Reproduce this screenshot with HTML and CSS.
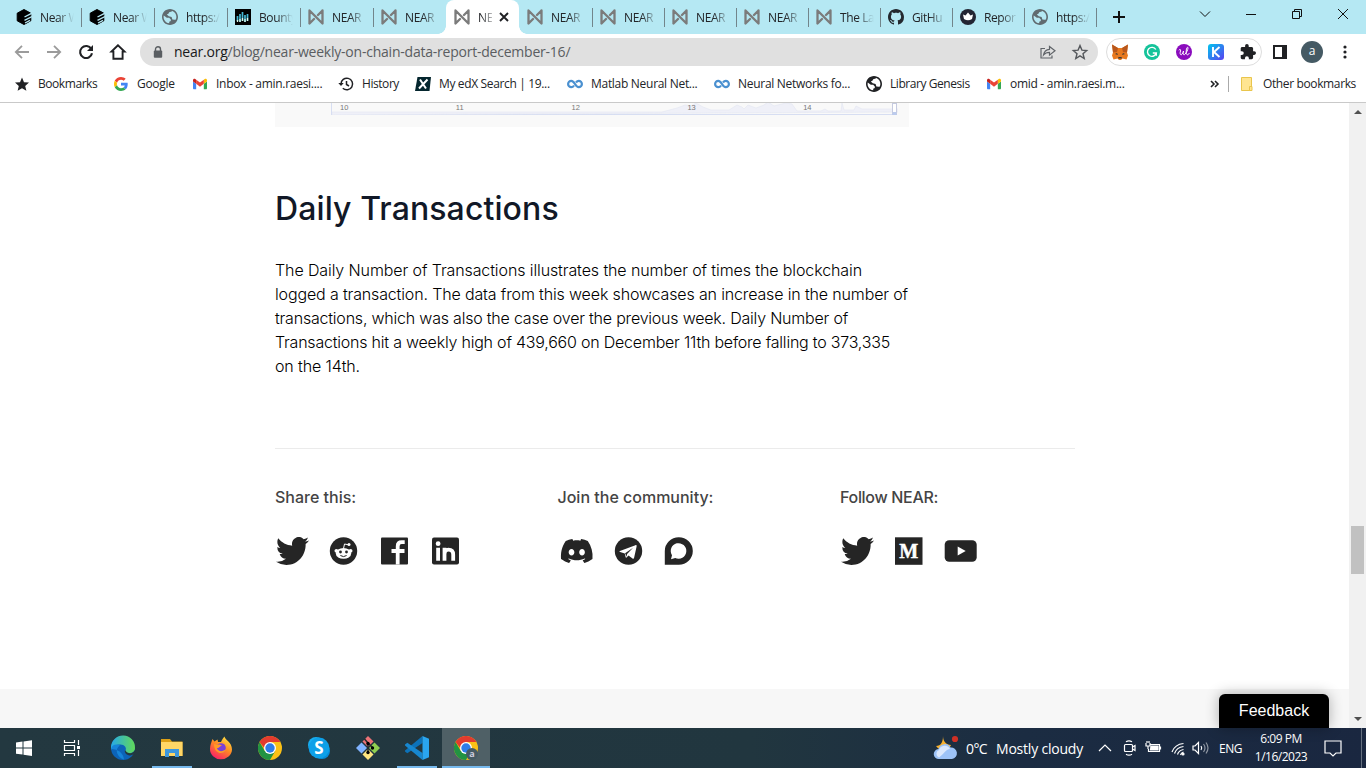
FILE: index.html
```html
<!DOCTYPE html>
<html lang="en">
<head>
<meta charset="utf-8">
<title>NEAR | Weekly On-Chain Data Report</title>
<link rel="stylesheet" href="styles.css">
</head>
<body>
<svg class="defs" aria-hidden="true">
  <symbol id="near" viewBox="0 0 16 16"><path d="M1.500 14.500V1.500L14.500 14.500V1.500M1.500 14.500L6 10M14.500 1.500L10 6" fill="none" stroke="#7b7b7b" stroke-width="2.300" stroke-linecap="round" stroke-linejoin="round"/></symbol>
  <symbol id="cube" viewBox="0 0 16 16"><path d="M8 .5l6.800 3.700v7.600L8 15.500l-6.800-3.700V4.200z" stroke="#000" stroke-linejoin="round"/><path d="M8.500 8L16 4.200M8.500 11.300L16 7.500M9 14l5-2.700" stroke="#b5e8f3" stroke-width="1.400"/></symbol>
  <symbol id="globe" viewBox="2 2 20 20"><path d="M12 2C6.480 2 2 6.480 2 12s4.480 10 10 10 10-4.480 10-10S17.520 2 12 2zm-1 17.930c-3.950-.49-7-3.850-7-7.930 0-.62.08-1.210.21-1.790L8 13h3l2 2v2l-2 1v1.930zM18 15.500l-3-.5-1-3-3.500-1-2.500-2 2-1 1-2 3-1 1-.41c2.930 1.190 5 4.060 5 7.410 0 1.500-.4 2.500-1 3.500z" fill="currentColor"/></symbol>
  <symbol id="gmail" viewBox="0 0 88 66"><path fill="#4285f4" d="M6 66h14V32L0 17v43c0 3.320 2.690 6 6 6"/><path fill="#34a853" d="M68 66h14c3.320 0 6-2.690 6-6V17L68 32"/><path fill="#fbbc04" d="M68 6v26l20-15V9c0-7.420-8.470-11.650-14.400-7.200"/><path fill="#ea4335" d="M20 32V6l24 18L68 6v26L44 50"/><path fill="#c5221f" d="M0 9v8l20 15V6l-5.600-4.200C8.470-2.650 0 1.580 0 9"/></symbol>
  <symbol id="loop" viewBox="0 0 16 10"><path d="M7 6.500C6 8 5.200 8.200 4.300 8.200a3.200 3.200 0 010-6.400c3.600 0 3.800 6.400 7.400 6.400a3.200 3.200 0 000-6.400C10.800 1.800 10 2.200 9 3.500" fill="none" stroke="#4a90d0" stroke-width="2.200"/></symbol>
  <symbol id="twitter" viewBox="0 2.200 24 19.600" preserveAspectRatio="none"><path d="M23.953 4.570a10 10 0 01-2.825.775 4.958 4.958 0 002.163-2.723c-.951.555-2.005.959-3.127 1.184a4.920 4.920 0 00-8.384 4.482C7.690 8.095 4.067 6.130 1.640 3.162a4.822 4.822 0 00-.666 2.475c0 1.710.87 3.213 2.188 4.096a4.904 4.904 0 01-2.228-.616v.06a4.923 4.923 0 003.946 4.827 4.996 4.996 0 01-2.212.085 4.936 4.936 0 004.604 3.417 9.867 9.867 0 01-6.102 2.105c-.39 0-.779-.023-1.170-.067a13.995 13.995 0 007.557 2.209c9.053 0 13.998-7.496 13.998-13.985 0-.21 0-.42-.015-.63A9.935 9.935 0 0024 4.590z" fill="#252525"/></symbol>
  <symbol id="chrome" viewBox="0 0 24 24"><circle cx="12" cy="12" r="12" fill="#fbc116"/><path d="M1.600 6A12 12 0 0012 24l5.200-9L12 12 6.800 15z" fill="#229342"/><path d="M1.600 6A12 12 0 0122.400 6H12l-5 7z" fill="#e33b2e"/><circle cx="12" cy="12" r="6" fill="#fff"/><circle cx="12" cy="12" r="4.700" fill="#2f7de9"/></symbol>
</svg>

<header class="browser">
  <div class="tabstrip">
    <div class="tab"><svg class="fav"><use href="#cube"/></svg><span>Near W</span></div>
    <div class="tab"><svg class="fav"><use href="#cube"/></svg><span>Near W</span></div>
    <div class="tab"><svg class="fav globe"><use href="#globe"/></svg><span>https:/</span></div>
    <div class="tab"><svg class="fav" viewBox="0 0 16 16"><rect width="16" height="16"/><path d="M2.500 7v5M5 5v8M7.500 3v9M10 6v7M12.500 5v7" stroke="#47b9d4" stroke-width="1.700"/><path d="M2.500 11v2M5 10v3M7.500 9v3M10 10v3M12.500 9v3" stroke="#dff7e8" stroke-width="1.300"/></svg><span>Bounty</span></div>
    <div class="tab"><svg class="fav"><use href="#near"/></svg><span>NEAR</span></div>
    <div class="tab before-active"><svg class="fav"><use href="#near"/></svg><span>NEAR</span></div>
    <div class="tab active"><svg class="fav"><use href="#near"/></svg><span>NE</span><svg class="close" viewBox="0 0 10 10"><path d="M1 1l8 8M9 1L1 9" stroke="#202124" stroke-width="1.900"/></svg></div>
    <div class="tab"><svg class="fav"><use href="#near"/></svg><span>NEAR</span></div>
    <div class="tab"><svg class="fav"><use href="#near"/></svg><span>NEAR</span></div>
    <div class="tab"><svg class="fav"><use href="#near"/></svg><span>NEAR</span></div>
    <div class="tab"><svg class="fav"><use href="#near"/></svg><span>NEAR</span></div>
    <div class="tab"><svg class="fav"><use href="#near"/></svg><span>The La</span></div>
    <div class="tab"><svg class="fav" viewBox="0 0 16 16"><path fill="#24292f" d="M8 0C3.580 0 0 3.580 0 8c0 3.540 2.290 6.530 5.470 7.590.4.07.55-.17.55-.38 0-.19-.01-.82-.01-1.490-2.010.37-2.530-.49-2.690-.94-.09-.23-.48-.94-.82-1.130-.28-.15-.68-.52-.01-.53.63-.01 1.080.58 1.230.82.72 1.210 1.870.87 2.330.66.07-.52.28-.87.51-1.070-1.780-.2-3.640-.89-3.640-3.950 0-.87.31-1.590.82-2.150-.08-.2-.36-1.020.08-2.120 0 0 .67-.21 2.200.82.64-.18 1.320-.27 2-.27s1.360.09 2 .27c1.530-1.040 2.200-.82 2.200-.82.44 1.100.16 1.920.08 2.120.51.56.82 1.270.82 2.150 0 3.070-1.870 3.750-3.650 3.950.29.25.54.73.54 1.480 0 1.070-.01 1.930-.01 2.200 0 .21.15.46.55.38A8.010 8.010 0 0016 8c0-4.420-3.580-8-8-8z"/></svg><span>GitHu</span></div>
    <div class="tab"><svg class="fav" viewBox="0 0 16 16"><circle cx="8" cy="8" r="8" fill="#222533"/><path d="M3 5.500l2.500 1L8 3.500l2.500 3 2.500-1-1 4.500q-4 2.500-8 0z" fill="#fff"/></svg><span>Repor</span></div>
    <div class="tab"><svg class="fav globe"><use href="#globe"/></svg><span>https:/</span></div>
    <svg class="newtab" viewBox="0 0 12 12"><path d="M6 0v12M0 6h12" stroke="#111" stroke-width="2"/></svg>
    <div class="winctl">
      <svg viewBox="0 0 12 12"><path d="M1 3.500l5 5 5-5" /></svg>
      <svg viewBox="0 0 12 12"><path d="M1 6.500h10"/></svg>
      <svg viewBox="0 0 12 12"><path d="M1.500 3.500h7v7h-7zM3.500 3.500v-2h7v7h-2"/></svg>
      <svg viewBox="0 0 12 12"><path d="M1 1l10 10M11 1L1 11"/></svg>
    </div>
  </div>

  <div class="toolbar">
    <div class="nav">
      <svg viewBox="0 0 16 16"><path d="M15 8H2M8 1.800L1.800 8 8 14.200" stroke="#9b9b9b" stroke-width="1.800" fill="none"/></svg>
      <svg viewBox="0 0 16 16"><path d="M1 8h13M8 1.800L14.200 8 8 14.200" stroke="#9b9b9b" stroke-width="1.800" fill="none"/></svg>
      <svg viewBox="0 0 16 16"><path d="M13.300 5A6 6 0 1014 9.200" stroke="#202124" stroke-width="2.100" fill="none"/><path d="M15 1v6H9z" fill="#202124"/></svg>
      <svg viewBox="0 0 16 16"><path d="M8 1.300L1.500 7.600H3.400V14.800h9.200V7.600h1.900z" stroke="#202124" stroke-width="1.900" fill="none"/></svg>
    </div>
    <div class="omnibox">
      <svg class="lock" viewBox="0 0 10 12"><path d="M2.500 5V3.200a2.500 2.500 0 015 0V5" stroke="#5a5e62" stroke-width="1.400" fill="none"/><rect x=".8" y="4.500" width="8.400" height="7.300" rx="1" fill="#5a5e62"/></svg>
      <span class="url"><b>near.org</b>/blog/near-weekly-on-chain-data-report-december-16/</span>
      <svg class="share" viewBox="0 0 16 14"><path d="M5 3.500H1v9.500h11V10.500M3.500 10c.6-3.700 3-5.500 6-5.700V1.500L15 5.800l-5.500 4.300V7.300c-2.700 0-4.500.8-6 2.700z" fill="none" stroke="#5f6368" stroke-width="1.200"/></svg>
      <svg class="star" viewBox="0 0 16 16"><path d="M8 1.500l1.900 4.600 4.800.4-3.700 3.200 1.200 4.800L8 11.900l-4.200 2.600L5 9.700 1.300 6.500l4.800-.4z" fill="none" stroke="#55585c" stroke-width="1.400"/></svg>
    </div>
    <div class="extensions">
      <svg viewBox="0 0 16 16"><path d="M0 .5l6 3.500h4l6-3.500-1 8 1 3-1.500 4-4-1-1.500 1.500h-2L5.500 14.500l-4 1L0 11.500l1-3z" fill="#e8791f"/><path d="M0 .5l6 3.500-1 4-4 .5zM16 .5L10 4l1 4 4 .5z" fill="#b8571c"/><path d="M5 9l1 2-3-1zM11 9l-1 2 3-1zM6.500 13h3l.5 1.500H6z" fill="#3b3b3b"/></svg>
      <svg viewBox="0 0 16 16"><circle cx="8" cy="8" r="8" fill="#15c39a"/><path d="M11.800 5.500A4.500 4.500 0 1012.300 9H8.800M12.300 8.500v3.300" stroke="#fff" stroke-width="1.400" fill="none"/></svg>
      <svg viewBox="0 0 16 16"><circle cx="8" cy="8" r="8" fill="#8a0cbd"/><path d="M2.800 6.300c1.200-1.500 2.200-.8 1.700.7-1 3 .2 4.800 1.500 3.200.8-1 1.200-2.200 1.500-3.200-.8 3.200.2 4.500 1.200 3.500C10.500 8.800 12 5.500 12 4c0-1.200-1.200-.8-1.500.8-.6 3-.3 6 .9 6 .8 0 1.500-.8 1.900-1.800" stroke="#fff" stroke-width="1" fill="none"/></svg>
      <svg viewBox="0 0 16 16"><defs><linearGradient id="kg" x2="1" y2="1"><stop stop-color="#00c6ee"/><stop offset="1" stop-color="#5b3ff0"/></linearGradient></defs><rect width="16" height="16" rx="3" fill="url(#kg)"/><path d="M5 3v10M11.500 3L6 8l5.500 5" stroke="#fff" stroke-width="1.900" fill="none"/></svg>
      <svg viewBox="1 1 22 22"><path d="M20.500 11H19V7c0-1.100-.9-2-2-2h-4V3.500a2.500 2.500 0 00-5 0V5H4c-1.100 0-2 .9-2 2v3.800h1.500a2.700 2.700 0 010 5.400H2V20c0 1.100.9 2 2 2h3.800v-1.500a2.700 2.700 0 015.400 0V22H17c1.100 0 2-.9 2-2v-4h1.500a2.500 2.500 0 000-5z" fill="#202124"/></svg>
    </div>
    <svg class="panel" viewBox="0 0 14 14"><path d="M1 1h12v12H1z" fill="#fff" stroke="#202124" stroke-width="2"/><path d="M9 1h4v12H9z" fill="#202124"/></svg>
    <span class="avatar">a</span>
    <svg class="kebab" viewBox="0 0 4 14"><circle cx="2" cy="2" r="1.600"/><circle cx="2" cy="7" r="1.600"/><circle cx="2" cy="12" r="1.600"/></svg>
  </div>

  <div class="bookmarks">
    <div class="bm tight"><svg viewBox="0 0 16 16"><path d="M8 1.500l2 4.700 5 .4-3.800 3.300 1.200 4.900L8 12.200l-4.400 2.600 1.200-4.900L1 6.600l5-.4z" fill="#202124"/></svg><span>Bookmarks</span></div>
    <div class="bm"><svg class="pad" viewBox="0 0 48 48"><path fill="#EA4335" d="M24 9.500c3.540 0 6.710 1.220 9.210 3.600l6.850-6.850C35.900 2.380 30.470 0 24 0 14.620 0 6.510 5.380 2.560 13.220l7.980 6.190C12.430 13.720 17.740 9.500 24 9.500z"/><path fill="#4285F4" d="M46.980 24.550c0-1.570-.15-3.090-.38-4.550H24v9.020h12.940c-.58 2.960-2.260 5.480-4.780 7.180l7.730 6c4.510-4.180 7.090-10.360 7.090-17.650z"/><path fill="#FBBC05" d="M10.530 28.590c-.48-1.450-.76-2.990-.76-4.590s.27-3.140.76-4.590l-7.980-6.190C.92 16.460 0 20.120 0 24c0 3.880.92 7.540 2.560 10.780l7.970-6.190z"/><path fill="#34A853" d="M24 48c6.480 0 11.930-2.130 15.890-5.810l-7.730-6c-2.150 1.450-4.920 2.300-8.160 2.300-6.260 0-11.570-4.220-13.470-9.910l-7.980 6.190C6.510 42.620 14.620 48 24 48z"/></svg><span>Google</span></div>
    <div class="bm"><svg class="pad"><use href="#gmail"/></svg><span>Inbox - amin.raesi....</span></div>
    <div class="bm tight"><svg viewBox="0 0 16 16"><path d="M3 8a5.800 5.800 0 111.800 4.200M8.500 5v3.500l2.500 1.500" stroke="#202124" stroke-width="1.500" fill="none"/><path d="M.3 7h5.400L3 10z" fill="#202124"/></svg><span>History</span></div>
    <div class="bm edx"><svg viewBox="0 0 16 16"><path d="M2.500 1H16l-1.500 14H0z" fill="#05262e"/><path d="M5 3.500l6 9M12.500 3.500L4 12.500" stroke="#fff" stroke-width="2"/></svg><span>My edX Search | 19...</span></div>
    <div class="bm"><svg><use href="#loop"/></svg><span>Matlab Neural Net...</span></div>
    <div class="bm"><svg><use href="#loop"/></svg><span>Neural Networks fo...</span></div>
    <div class="bm tight"><svg class="dark"><use href="#globe"/></svg><span>Library Genesis</span></div>
    <div class="bm"><svg class="pad"><use href="#gmail"/></svg><span>omid - amin.raesi.m...</span></div>
    <div class="more"><svg viewBox="0 0 9 8"><path d="M1 1l3 3-3 3M5 1l3 3-3 3" stroke="#202124" stroke-width="1.600" fill="none"/></svg></div>
    <div class="bm other"><svg viewBox="0 0 16 16"><path d="M2.500 1.500h10v11l-1 2h-9z" fill="#ffe591" stroke="#e9c54c"/><path d="M10.500 14.500v-4h2.500v4z" fill="#ffe591" stroke="#e9c54c"/></svg><span>Other bookmarks</span></div>
  </div>
</header>

<div class="viewport">
  <main class="page">
    <div class="chart">
      <div class="range">
        <svg class="area" viewBox="0 0 566 12"><path d="M0 12V9L330 9l15-4 8-3 6 1 5-3 7 4 8 3h18l8-5 5 2 2 2 4-4 8 3 8-3 4-3 6 4 12-3 6 1 5 7h24l4-2 3 2h13l1-8 2 7h10l2-4 6 3h48v3z" fill="#eff0f8" stroke="#e3e6f2" stroke-width=".6"/></svg>
        <span>10</span><span>11</span><span>12</span><span>13</span><span>14</span>
        <i class="handle"></i>
      </div>
    </div>
    <article>
      <h1>Daily Transactions</h1>
      <p>
        <span class="l1">The Daily Number of Transactions illustrates the number of times the blockchain</span><br>
        <span class="l2">logged a transaction. The data from this week showcases an increase in the number of</span><br>
        <span class="l3">transactions, which was also the case over the previous week. Daily Number of</span><br>
        <span class="l4">Transactions hit a weekly high of 439,660 on December 11th before falling to 373,335</span><br>
        <span class="l5">on the 14th.</span>
      </p>
    </article>
    <section class="social">
      <div>
        <h2>Share this:</h2>
        <div class="icons">
          <svg><use href="#twitter"/></svg>
          <svg viewBox="-2.500 0 33 28"><circle cx="14" cy="14" r="13.700" fill="#252525"/><ellipse cx="14" cy="16.400" rx="7.700" ry="5.400" fill="#fff"/><circle cx="6.900" cy="13.800" r="1.900" fill="#fff"/><circle cx="21.100" cy="13.800" r="1.900" fill="#fff"/><path d="M14 11.500l1-4.500 4 .8" stroke="#fff" fill="none"/><circle cx="19.500" cy="7.600" r="1.500" fill="#fff"/><circle cx="11" cy="15" r="1.400" fill="#252525"/><circle cx="17" cy="15" r="1.400" fill="#252525"/><path d="M10.900 18.500q3.100 2.200 6.200 0" stroke="#252525" fill="none"/></svg>
          <svg viewBox="-2.500 0 33 28"><rect x=".5" y=".5" width="27" height="27" rx="1" fill="#252525"/><path d="M17.200 27.500V9.200q0-4 4-4h3M11 14h13" stroke="#fff" stroke-width="3.800" fill="none"/></svg>
          <svg viewBox="-2.500 0 33 28"><rect x=".5" y=".5" width="27" height="27" rx="2" fill="#252525"/><circle cx="6.600" cy="6.700" r="2.400" fill="#fff"/><path d="M6.600 10.700v13M13 10.700v13M13 17q0-4.300 4-4.300 4.700 0 4.700 5v6" stroke="#fff" stroke-width="3.800" fill="none"/></svg>
        </div>
      </div>
      <div>
        <h2>Join the community:</h2>
        <div class="icons community">
          <svg viewBox="-.7 2 25 20"><path fill="#252525" d="M20.317 4.370a19.791 19.791 0 00-4.885-1.515.074.074 0 00-.079.037c-.211.375-.445.865-.608 1.250-1.845-.276-3.680-.276-5.487 0-.164-.393-.406-.874-.618-1.250a.077.077 0 00-.079-.037 19.736 19.736 0 00-4.885 1.515.07.07 0 00-.032.028C.533 9.046-.319 13.580.099 18.058a.082.082 0 00.031.056c2.053 1.508 4.041 2.423 5.993 3.029a.078.078 0 00.084-.028c.462-.63.873-1.295 1.226-1.994a.076.076 0 00-.042-.106c-.653-.248-1.274-.55-1.872-.892a.077.077 0 01-.008-.128c.126-.094.252-.192.372-.291a.074.074 0 01.078-.011c3.928 1.793 8.180 1.793 12.061 0a.074.074 0 01.079.01c.12.099.246.198.373.292a.077.077 0 01-.007.128 12.299 12.299 0 01-1.873.891.077.077 0 00-.041.107c.36.698.772 1.363 1.225 1.993a.076.076 0 00.084.029c1.961-.607 3.950-1.522 6.002-3.029a.077.077 0 00.031-.055c.5-5.177-.838-9.674-3.549-13.660a.061.061 0 00-.031-.029zM8.020 15.331c-1.183 0-2.157-1.086-2.157-2.419s.956-2.419 2.157-2.419c1.211 0 2.176 1.095 2.157 2.419 0 1.333-.956 2.419-2.157 2.419zm7.975 0c-1.183 0-2.157-1.086-2.157-2.419s.955-2.419 2.157-2.419c1.211 0 2.176 1.095 2.157 2.419 0 1.333-.946 2.419-2.157 2.419z"/></svg>
          <svg viewBox="-3.500 0 33 28"><circle cx="14" cy="14" r="13.700" fill="#252525"/><path d="M5.400 14L20.900 8.200c.8-.3 1.400.2 1.200 1.200l-2.500 11.400c-.2 1-.8 1.200-1.600.7l-4-3-2 2c-.5.4-.8.1-.9-.5l-.8-3.600-4.700-1.500c-.9-.3-.9-.6-.2-.9z" fill="#fff"/><path d="M10.600 16.300l8-5.600-6 6.300-.6 2.700z" fill="#252525"/></svg>
          <svg viewBox="-2.500 0 33 28"><path d="M.3 27.700V14A14 13.700 0 1114.300 27.700z" fill="#252525"/><path d="M6.500 22.200l1-4a7.800 7.800 0 113.200 2.800z" fill="#fff"/></svg>
        </div>
      </div>
      <div>
        <h2 class="follow">Follow NEAR:</h2>
        <div class="icons">
          <svg><use href="#twitter"/></svg>
          <svg viewBox="-2.500 0 33 28"><rect x=".5" y=".3" width="27.500" height="27.500" fill="#252525"/><text x="14.200" y="21" text-anchor="middle" textLength="19" lengthAdjust="spacingAndGlyphs" class="medium">M</text></svg>
          <svg viewBox="-1.200 0 33 28"><rect x=".5" y="3.200" width="32" height="21.600" rx="4.500" fill="#252525"/><path d="M13.500 9.400v9.200l8-4.600z" fill="#fff"/></svg>
        </div>
      </div>
    </section>
    <footer></footer>
    <div class="feedback">Feedback</div>
  </main>
  <div class="scrollbar"><i class="up"></i><b></b><i class="down"></i></div>
</div>

<div class="taskbar">
  <div class="apps">
    <div><svg viewBox="0 0 24 24"><path d="M4 6.500l6.500-.9v6H4zM11.500 5.400L20 4.200v7.400h-8.500zM4 12.500h6.500v6.100L4 17.700zM11.500 12.500H20V20l-8.500-1.200z" fill="#fff"/></svg></div>
    <div class="taskview"><svg viewBox="0 0 24 24"><path d="M4.500 4v2.500h10V4M4.500 20v-2.500h10V20M4.500 9.500h10v5h-10zM18.500 4v5M18.500 14v6" stroke="#fff" fill="none" stroke-width="1.200"/><path d="M17 10h3v3h-3z" fill="#fff"/></svg></div>
    <div><svg viewBox="0 0 24 24"><defs><linearGradient id="eg"><stop stop-color="#26a9e8"/><stop offset="1" stop-color="#62d957"/></linearGradient></defs><circle cx="12" cy="12" r="12" fill="#0c63b8"/><path d="M0 11A12 12 0 0124 12c0 4-3.500 5.500-7 5.500-3 0-3.500-1.500-2.500-3 1.500-2.500-1-6-5-6C5 8.500 1.500 10 0 14z" fill="url(#eg)"/><path d="M9 9.500c-6 3.500-3 12 4 14A12 12 0 000 13c1-5 6-5.500 9-3.500z" fill="#1684d8"/><path d="M14 14c-1 3 2 5.500 5.500 5.500l4-1.500 1-3.500h-1c-2 4-7 3.500-9.500-.5z" fill="#233840"/></svg></div>
    <div class="open"><svg viewBox="0 0 24 24"><path d="M1 3h9l2 2.500h10.500V20H1z" fill="#dda016"/><path d="M1 6h21.500v14H1z" fill="#ffd666"/><path d="M5 13h14v8h-4v-4H9v4H5z" fill="#3e97dd"/></svg></div>
    <div><svg viewBox="0 0 24 24"><defs><linearGradient id="fg" x1=".8" x2=".2" y2="1"><stop stop-color="#ffe642"/><stop offset=".45" stop-color="#ff8a24"/><stop offset="1" stop-color="#f9166c"/></linearGradient></defs><path d="M3.500 3l2 2.500 3-2L9 6h3c1-2 2-4 3.500-5.500C16 4 23 6 23 13.500A11 10 0 011 13C1 9 2.500 6 3.500 3z" fill="url(#fg)"/><circle cx="12" cy="12" r="4.800" fill="#7b40d8"/><path d="M5 8c3 2 5-1 8 2-3 0-2 2-5 2 1 4 6 4 9 1-1 6-12 6-12-5z" fill="#ff9b25"/></svg></div>
    <div><svg><use href="#chrome"/></svg></div>
    <div><svg viewBox="0 0 24 24"><rect x="1" y="1" width="16" height="16" rx="8" fill="#18aef0"/><rect x="7" y="7" width="16" height="16" rx="8" fill="#078cd8"/><circle cx="12" cy="12" r="10.400" fill="#0da0e8"/><text x="12" y="18" text-anchor="middle" class="skype">S</text></svg></div>
    <div><svg viewBox="0 0 24 24"><path d="M12 0l5.500 5.500L12 11 6.500 5.500z" fill="#ed7377"/><path d="M5.500 6.500L11 12l-5.500 5.500L0 12z" fill="#80b3ff"/><path d="M18.500 6.500L24 12l-5.500 5.500L13 12z" fill="#90cf50"/><path d="M12 13l5.500 5.500L12 24l-5.500-5.500z" fill="#ffe680"/><path d="M8.500 3l3.500 4V17M12 7l5 5" stroke="#25282c" stroke-width="1.500" fill="none"/><circle cx="12" cy="7.500" r="1.700"/><circle cx="12" cy="16.500" r="1.700"/><circle cx="16.500" cy="12" r="1.700"/></svg></div>
    <div class="open"><svg viewBox="0 0 24 24"><path d="M17.500 0v7L2.300 17.300 0 15.500v-1z" fill="#0c72b9"/><path d="M17.500 24v-7L2.300 6.700 0 8.500v1z" fill="#1787cf"/><path d="M17.500 0L24 2.800v18.400L17.500 24z" fill="#2aa5ef"/></svg></div>
    <div class="current"><svg viewBox="0 0 24 24"><use href="#chrome"/><circle cx="18" cy="18" r="6" fill="#455a64"/><text x="18" y="21" text-anchor="middle" class="badge">a</text></svg></div>
  </div>
  <div class="tray">
    <svg class="weather" viewBox="0 0 26 26"><path d="M10 1c0 6 4 9 8 9-2 6-11 7-15 1 5 0 7-4 7-10z" fill="#f8b12e"/><circle cx="22" cy="4" r="3.100" fill="#cf3025"/><path d="M6 24a5 5 0 01-.5-10 6.500 6.500 0 0112-1.500A5.800 5.800 0 0119 24z" fill="#9dc3f7"/><path d="M6 22.500a4 4 0 010-7.500 6 6 0 0111-1c-4 0-5 4-11 8.500z" fill="#dbe8fc"/></svg>
    <span class="temp">0°C</span><span class="cond">Mostly cloudy</span>
    <svg class="i1" viewBox="0 0 16 16"><path d="M2 11l6-6 6 6"/></svg>
    <svg class="i2" viewBox="0 0 16 16"><rect x="2.500" y="4.500" width="8" height="7" rx="1"/><path d="M10.500 7l2.500-1.500v5L10.500 9M4 1.800q3-2 6 0M4 14.200q3 2 6 0"/></svg>
    <svg class="i3" viewBox="0 0 17 16"><path d="M5.500 4.500h9v7h-11V9M15.500 6.500v3M1 3v3h4V3M2 1v2M4 1v2M3 6v3" /><path d="M6 6h7v4H5.500z" fill="#fff"/></svg>
    <svg class="i4" viewBox="0 0 16 16"><path d="M2 12C4 6.500 8 4 13.500 3.500M4.500 13.500C6 9 8.500 7 13.500 6.500M7.500 14.500c1-3 3-4.500 6-5M10.500 15c.5-1.500 1.500-2.500 3-3"/><circle cx="13" cy="14" r="1" fill="#fff"/></svg>
    <svg class="i5" viewBox="0 0 17 16"><path d="M1 6h2l3.500-3.500v11L3 10H1zM9 6q1.500 2 0 4"/><path d="M11.500 4q3 4 0 8M14 2.500q4 5.500 0 11" opacity=".5"/></svg>
    <span class="lang">ENG</span>
    <div class="clock"><span>6:09 PM</span><span>1/16/2023</span></div>
    <svg class="notif" viewBox="0 0 18 18"><path d="M1 2h16v12h-5l-3 3-3-3H1z"/></svg>
    <i class="peek"></i>
  </div>
</div>
</body>
</html>
```
FILE: styles.css
```css
* { box-sizing: border-box; }
body { margin: 0; width: 1366px; height: 768px; overflow: hidden; display: flex; flex-direction: column; background: #fff; font-family: "Open Sans", "Noto Sans", sans-serif; font-size: 12px; color: #222427; }
svg { display: block; flex: none; overflow: visible; }
.defs { position: absolute; width: 0; height: 0; }

/* Browser chrome */
.browser { flex: none; height: 103px; border-bottom: 1px solid #c9c9c9; }
.tabstrip { height: 34px; padding-left: 8px; background: #b5e8f3; display: grid; grid-template-columns: repeat(8, 73px) repeat(7, 72px) 46px 224px; align-items: stretch; }
.tab { display: flex; align-items: center; gap: 8px; padding-left: 8px; position: relative; }
.tab::after { content: ""; position: absolute; right: -1px; top: 8px; width: 1px; height: 19px; background: #72858b; }
.before-active::after, .active::after { display: none; }
.fav { width: 16px; height: 16px; }
.globe { color: #606b70; }
.dark { color: #202124; }
.tab span { width: 35px; white-space: nowrap; letter-spacing: -.4px; mask-image: linear-gradient(90deg, #000 50%, transparent 97%); }
.active { background: #fff; border-radius: 8px 8px 0 0; }
.active::before { content: ""; position: absolute; left: -8px; right: -8px; bottom: 0; height: 8px; background: radial-gradient(circle at 0 0, transparent 7.500px, #fff 8px) left / 8px 8px no-repeat, radial-gradient(circle at 100% 0, transparent 7.500px, #fff 8px) right / 8px 8px no-repeat; }
.tab.active span { width: 14px; mask-image: linear-gradient(90deg, #000 20%, rgba(0, 0, 0, .3)); }
.close { width: 10px; height: 10px; margin-left: -1px; }
.newtab { width: 12px; height: 12px; align-self: center; justify-self: center; }
.winctl { display: flex; gap: 34px; padding: 8px 0 0 57px; }
.winctl svg { width: 12px; height: 12px; fill: none; stroke: #111; }

.toolbar { height: 36px; display: flex; align-items: center; }
.nav { width: 140px; padding-left: 14px; display: flex; gap: 16px; }
.nav svg { width: 16px; height: 16px; }
.omnibox { width: 958px; height: 28px; border-radius: 14px; background: #e0e0e0; display: flex; align-items: center; }
.lock { width: 10px; height: 12px; margin-left: 13px; }
.url { margin-left: 11px; width: 855px; font-size: 14px; line-height: 18px; color: #5a5d61; letter-spacing: -.225px; white-space: nowrap; }
.url b { font-weight: 400; color: #18191b; }
.share { width: 16px; height: 14px; margin-left: 11px; }
.star { width: 16px; height: 16px; margin-left: 16px; }
.extensions { width: 156px; height: 28px; margin-left: 8px; padding-left: 5px; border: 1px solid #ddd; border-radius: 14px; display: flex; align-items: center; gap: 16px; }
.extensions svg { width: 16px; height: 16px; }
.panel { width: 14px; height: 14px; margin-left: 11px; }
.avatar { width: 22px; height: 22px; margin-left: 14px; border-radius: 50%; background: #455a64; color: #fff; text-align: center; line-height: 20px; font-size: 12px; }
.kebab { width: 4px; height: 14px; margin-left: 20px; fill: #202124; }

.bookmarks { height: 32px; padding: 0 0 5px 14px; display: grid; grid-template-columns: 99px 79px 146px 77px 152px 147px 152px 120px 214px 29px 127px; align-items: center; }
.bm { display: flex; align-items: center; gap: 8px; white-space: nowrap; letter-spacing: -.29px; }
.bm.tight { letter-spacing: -.44px; }
.bm.edx { letter-spacing: -.35px; }
.bm.other { padding-left: 10px; letter-spacing: -.37px; }
.bm svg { width: 16px; height: 16px; }
.bm svg.pad { padding: 1px; }
.more { height: 16px; display: flex; align-items: center; padding-left: 10px; border-right: 1px solid #aaa; }
.more svg { width: 9px; height: 8px; }

/* Article */
.viewport { flex: none; height: 625px; display: flex; }
.page { width: 1349px; position: relative; display: flex; flex-direction: column; padding-left: 275px; }
.chart { width: 634px; height: 24px; background: #f9f9f9; padding-left: 56px; }
.range { width: 566px; height: 12px; border: solid #d7def2; border-width: 0 0 1px 1px; position: relative; display: grid; grid-template-columns: repeat(5, 115.800px); padding-left: 8px; font: 7.500px/10px "Liberation Sans", sans-serif; color: #777; }
.area { position: absolute; left: 0; top: 0; width: 566px; height: 12px; overflow: hidden; }
.range span { position: relative; }
.handle { position: absolute; right: 0; top: 0; width: 5px; height: 12px; border: 1px solid #c6cbe0; border-bottom: 3px solid #bccbed; background: #fff; }
article { height: 321px; padding-top: 60px; }
h1 { margin: 0; font: 550 32px/44px Inter, sans-serif; color: #111827; white-space: nowrap; letter-spacing: .1px; }
p { margin: 27px 0 0; font: 300 16px/24px Inter, sans-serif; color: #000; white-space: nowrap; }
.l1 { letter-spacing: -.103px; }
.l2 { letter-spacing: -.144px; }
.l3 { letter-spacing: -.208px; }
.l4 { letter-spacing: -.214px; }
.l5 { letter-spacing: -.12px; }
.social { width: 800px; height: 241px; border-top: 1px solid #ebebeb; display: grid; grid-template-columns: 282.500px 282.500px 1fr; padding-top: 36px; }
h2 { margin: 0; font: 500 16px/24px Inter, sans-serif; color: #444; white-space: nowrap; }
.follow { letter-spacing: -.319px; }
.icons { display: flex; gap: 18px; margin: 28px 0 0 1px; }
.community { margin-left: 2.500px; }
.icons svg { width: 33px; height: 28px; }
.icons use { width: 31px; }
.medium { font: bold 20px "Liberation Serif", serif; fill: #fff; stroke: #fff; stroke-width: .4px; }
footer { margin-left: -275px; height: 39px; background: #f7f7f7; }
.feedback { position: absolute; right: 20px; bottom: 0; width: 110px; height: 34px; border-radius: 6px 6px 0 0; background: #000; color: #fff; text-align: center; font: 16px/33px "Liberation Sans", sans-serif; box-shadow: 0 0 14px rgba(0, 0, 0, .3); }
.scrollbar { width: 17px; background: #f1f1f1; padding: 7px 2px; display: flex; flex-direction: column; align-items: center; }
.scrollbar b { width: 13px; height: 48px; margin-top: 412px; background: #c1c1c1; }
.scrollbar i { border: 4px solid transparent; }
.scrollbar .up { margin-top: -4px; border-bottom-color: #505050; }
.scrollbar .down { margin-top: auto; margin-bottom: -4px; border-top-color: #505050; }

/* Taskbar */
.taskbar { flex: none; height: 40px; display: flex; justify-content: space-between; background: linear-gradient(90deg, #233840, #21363f 55%, #1b2c42 75%, #1a2740); color: #fff; }
.apps { display: grid; grid-template-columns: 48px 50px repeat(8, 49px); }
.apps div { display: flex; align-items: center; justify-content: center; position: relative; }
.apps .taskview { padding-right: 3px; }
.apps svg { width: 24px; height: 24px; }
.apps .open::after, .apps .current::after { content: ""; position: absolute; left: 5px; right: 4px; bottom: 0; height: 2px; background: #76b9ed; }
.apps .current { background: #4f6066; margin-left: 1px; }
.apps .current::after { left: 0; right: 0; }
.skype { font: bold 17px "Open Sans", sans-serif; fill: #fff; }
.badge { font: bold 9px "Open Sans", sans-serif; fill: #ccd; }
.tray { width: 433px; display: flex; align-items: center; white-space: nowrap; font-size: 14px; }
.tray svg { fill: none; stroke: #fff; stroke-width: 1.200; height: 16px; width: 16px; }
.tray .weather { width: 26px; height: 26px; stroke: none; }
.temp { width: 22px; margin-left: 7px; letter-spacing: -.6px; }
.cond { width: 87px; margin-left: 8px; letter-spacing: -.207px; }
.tray .i1 { margin-left: 14px; }
.tray .i2 { margin-left: 9px; }
.tray .i3 { margin-left: 7px; width: 17px; }
.tray .i4 { margin-left: 8px; }
.tray .i5 { margin-left: 6px; width: 17px; }
.lang { margin-left: 10px; width: 24px; font-size: 12px; letter-spacing: -.48px; }
.clock { width: 54px; margin-left: 11px; display: flex; flex-direction: column; align-items: center; font-size: 12px; line-height: 18px; letter-spacing: -.5px; }
.tray .notif { width: 18px; height: 18px; margin-left: 16px; }
.peek { width: 1px; height: 40px; background: #65707f; margin-left: 19px; }
```
